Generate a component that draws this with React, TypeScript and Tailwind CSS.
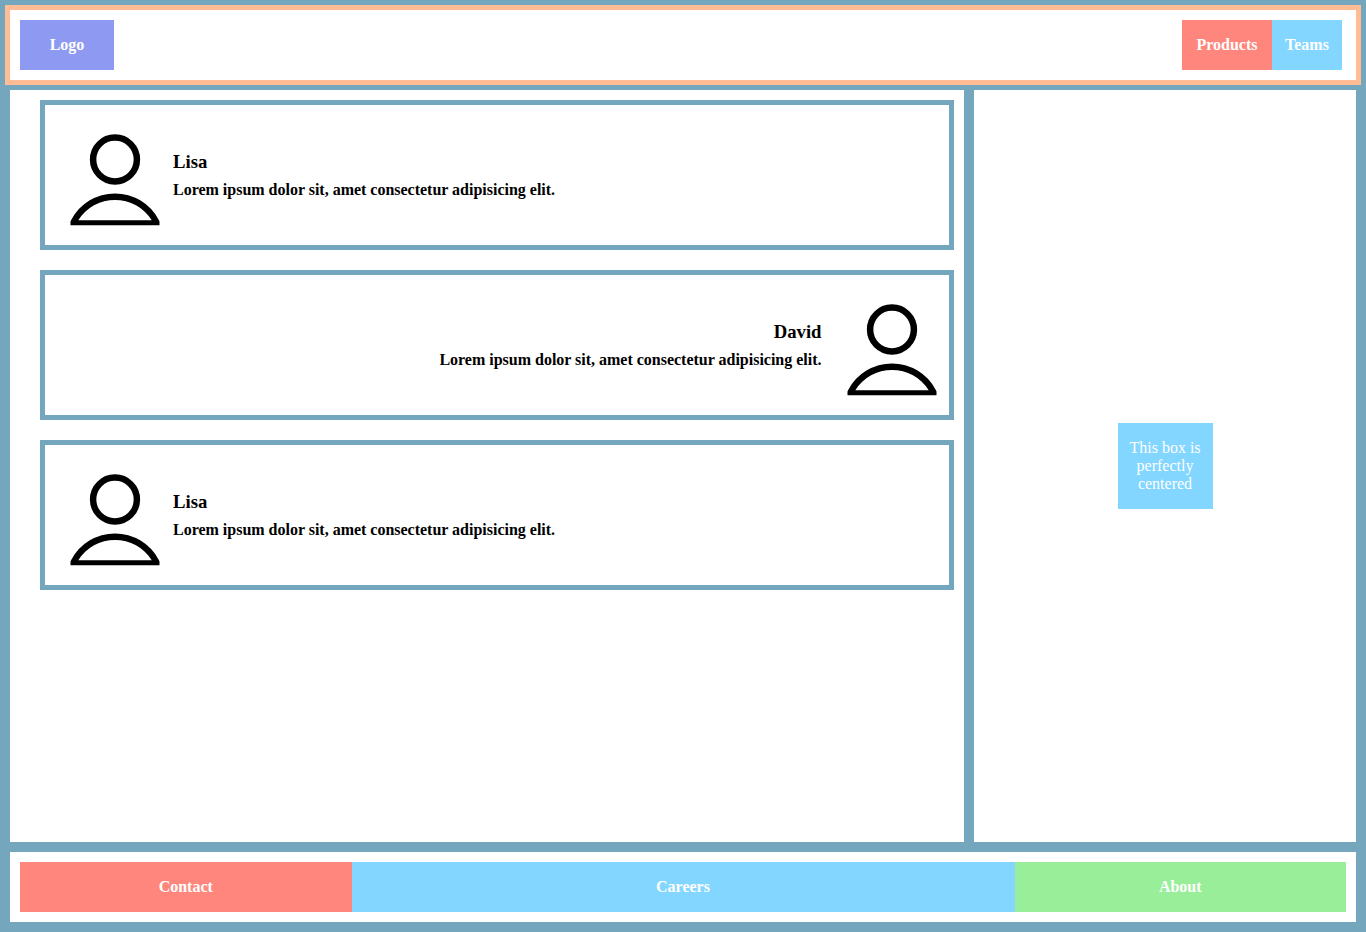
type Person = { name: string; reverse?: boolean };

const people: Person[] = [{ name: 'Lisa' }, { name: 'David', reverse: true }, { name: 'Lisa' }];

function Avatar() {
  return (
    <svg viewBox="0 0 100 100" className="h-[100px] w-[100px] shrink-0" fill="none" stroke="#000" strokeWidth="6.5">
      <circle cx="50" cy="29.5" r="21.9" />
      <path
        d="M5.5 95.3V91.5L6.2 90A49.4 49.4 0 0 1 93.8 90L94.5 91.5V95.3ZM13.3 90.2H86.7A43.4 43.4 0 0 0 13.3 90.2Z"
        fill="#000"
        fillRule="evenodd"
        stroke="none"
      />
    </svg>
  );
}

function Card({ name, reverse }: Person) {
  return (
    <article
      className={
        reverse
          ? 'flex h-[150px] flex-row-reverse items-center border-5 border-[#74a7be] pt-[10px] pr-[7px] text-right'
          : 'flex h-[150px] items-center border-5 border-[#74a7be] pt-[10px] pl-5'
      }
    >
      <Avatar />
      <div className={reverse ? 'mr-[20.5px] pb-[10px]' : 'ml-2 pb-[10px]'}>
        <h3 className="text-[18.72px] leading-[19px] font-bold">{name}</h3>
        <h4 className="mt-[10px] text-base leading-[18px] font-bold tracking-[-0.01px]">
          Lorem ipsum dolor sit, amet consectetur adipisicing elit.
        </h4>
      </div>
    </article>
  );
}

export default function App() {
  return (
    <div className="flex h-screen flex-col bg-[#74a7be] p-[5px] font-['Liberation_Serif',serif] text-base leading-[18px] text-black">
      <header className="flex h-20 shrink-0 justify-between border-5 border-[#ffbc95] bg-white py-[10px] pr-[14px] pl-[10px] font-bold text-white">
        <div className="flex w-[94px] items-center justify-center bg-[#8e9af2]">Logo</div>
        <nav className="flex">
          <a className="flex w-[90px] items-center justify-center bg-[#ff867c]">Products</a>
          <a className="flex w-[70px] items-center justify-center bg-[#82d6ff]">Teams</a>
        </nav>
      </header>
      <div className="flex min-h-0 flex-1 gap-[10px] p-[5px]">
        <main className="flex w-[954px] flex-col gap-5 bg-white py-[10px] pr-[10px] pl-[30px]">
          {people.map((person, index) => (
            <Card key={index} {...person} />
          ))}
        </main>
        <aside className="flex flex-1 items-center justify-center bg-white">
          <p className="h-[86px] w-[95px] bg-[#82d6ff] px-[10px] py-4 text-center text-white">
            This box is perfectly centered
          </p>
        </aside>
      </div>
      <footer className="m-[5px] grid h-[70px] shrink-0 grid-cols-[1fr_2fr_1fr] bg-white p-[10px] font-bold text-white">
        <a className="flex items-center justify-center bg-[#ff867c]">Contact</a>
        <a className="flex items-center justify-center bg-[#82d6ff]">Careers</a>
        <a className="flex items-center justify-center bg-[#99ee99]">About</a>
      </footer>
    </div>
  );
}
